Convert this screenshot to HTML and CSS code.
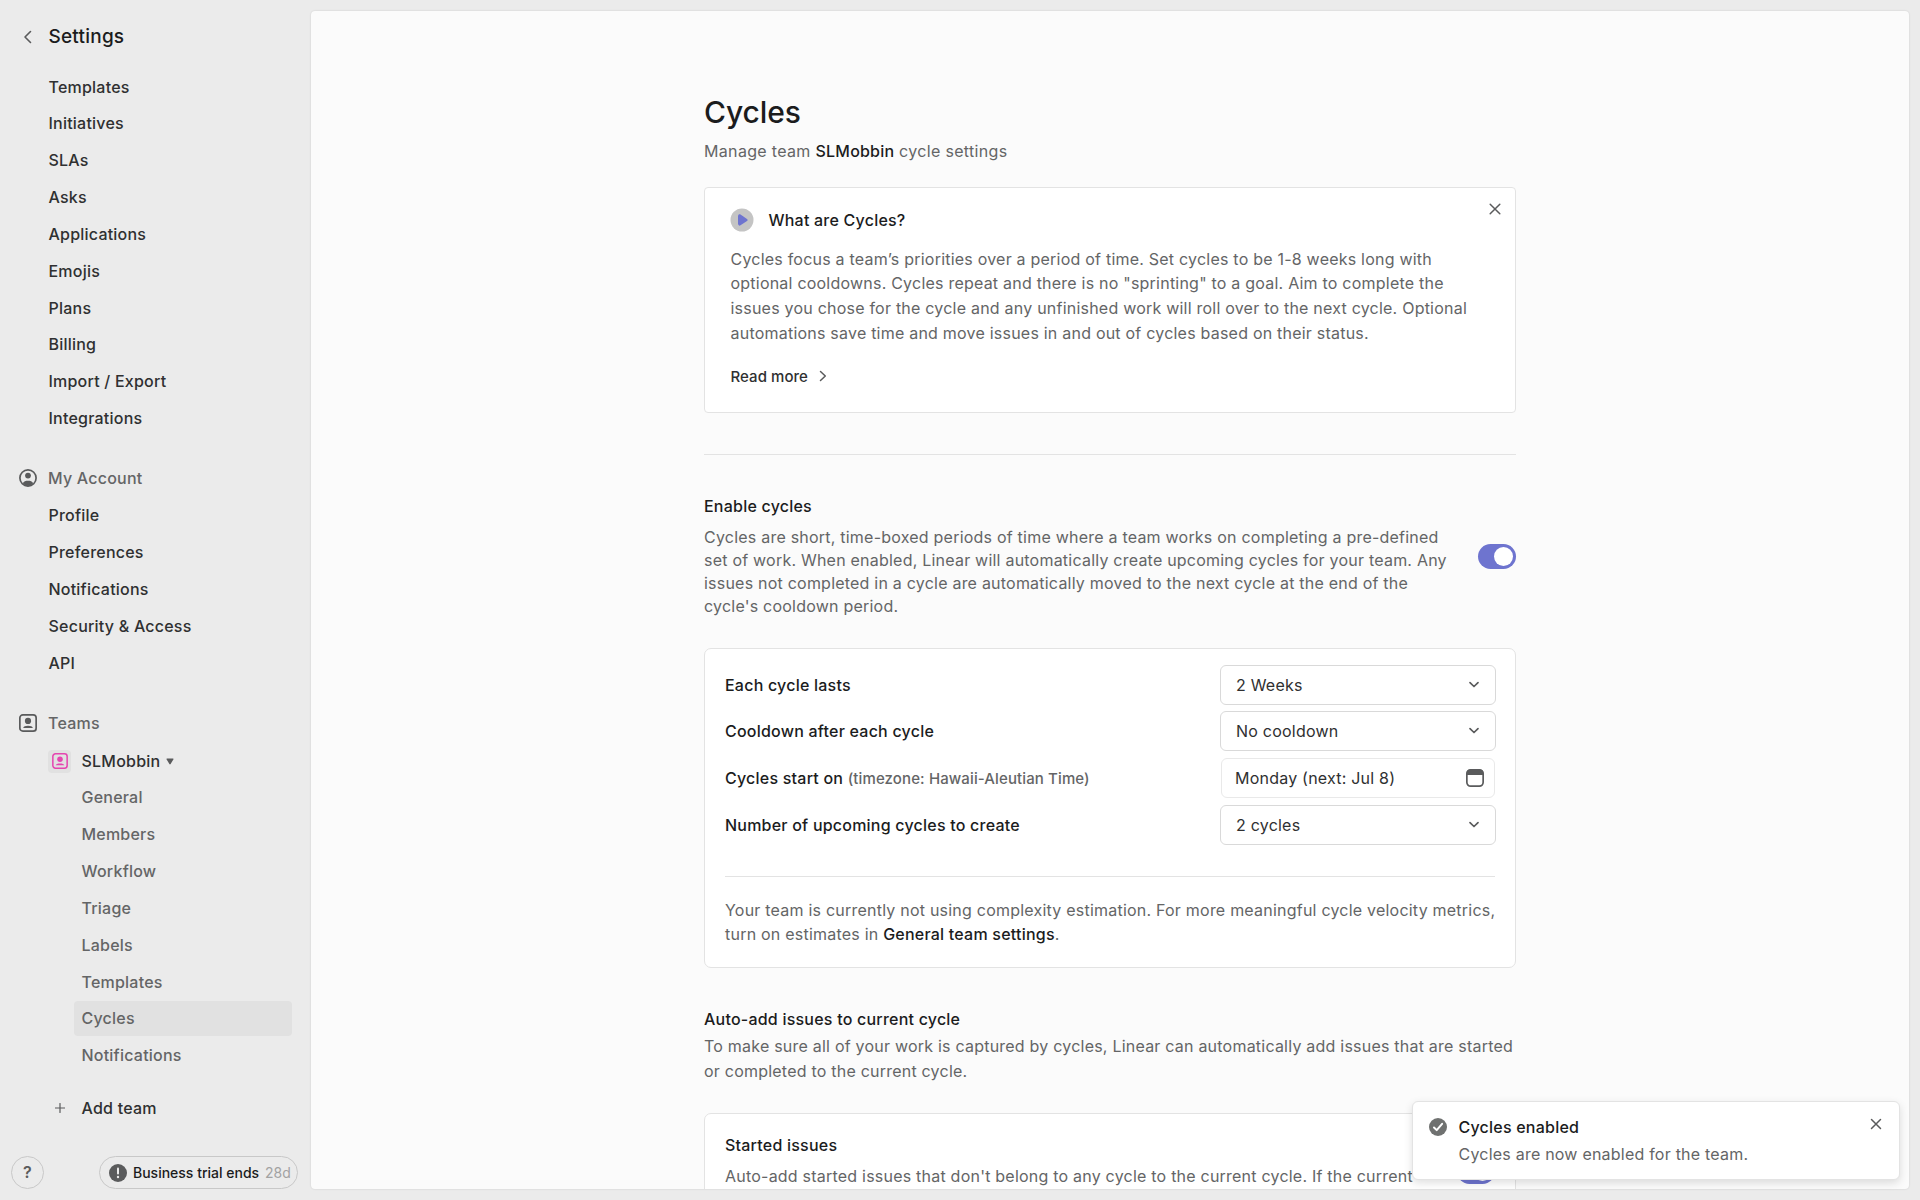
FILE: index.html
```html
<!DOCTYPE html>
<html lang="en">
<head>
    <meta charset="UTF-8">
    <title>Cycles - Settings</title>
    <link rel="stylesheet" href="styles.css">
</head>
<body>
<div class="sidebar">
    <div class="back">
        <svg width="18" height="18" viewBox="0 0 18 18"><path d="M11.500 3.500 6 9l5.500 5.500" fill="none" stroke="#5a5b5c" stroke-width="1.600" stroke-linecap="round" stroke-linejoin="round"/></svg>
        <span>Settings</span>
    </div>
    <ul class="menu">
        <li>Templates</li>
        <li>Initiatives</li>
        <li>SLAs</li>
        <li>Asks</li>
        <li>Applications</li>
        <li>Emojis</li>
        <li>Plans</li>
        <li>Billing</li>
        <li>Import / Export</li>
        <li>Integrations</li>
    </ul>
    <div class="group">
        <svg width="18" height="18" viewBox="0 0 18 18"><circle cx="9" cy="9" r="8.100" fill="none" stroke="#5a5b5c" stroke-width="1.700"/><circle cx="9" cy="6.600" r="2.900" fill="#5a5b5c"/><path d="M3.800 14.200C5 12 6.500 11.700 9 11.700s4 .3 5.200 2.500C12.800 16 11 17 9 17s-3.800-1-5.200-2.800z" fill="#5a5b5c"/></svg>
        <span>My Account</span>
    </div>
    <ul class="menu">
        <li>Profile</li>
        <li>Preferences</li>
        <li>Notifications</li>
        <li>Security &amp; Access</li>
        <li>API</li>
    </ul>
    <div class="group">
        <svg width="18" height="18" viewBox="0 0 18 18"><rect x=".85" y=".85" width="16.300" height="16.300" rx="3" fill="none" stroke="#5a5b5c" stroke-width="1.700"/><circle cx="9" cy="6.900" r="3.100" fill="#5a5b5c"/><path d="M4.200 13.900c.3-1.400 2-2.100 4.800-2.100s4.500.7 4.800 2.100z" fill="#5a5b5c"/></svg>
        <span>Teams</span>
    </div>
    <div class="team">
        <div class="team-icon">
            <svg width="16" height="16" viewBox="0 0 18 18"><rect x=".95" y=".95" width="16.100" height="16.100" rx="3" fill="none" stroke="#e545b0" stroke-width="1.700"/><circle cx="9" cy="6.900" r="3.100" fill="#e545b0"/><path d="M4.200 13.900c.3-1.400 2-2.100 4.800-2.100s4.500.7 4.800 2.100z" fill="#e545b0"/></svg>
        </div>
        <span>SLMobbin</span>
        <svg class="caret" width="8" height="7" viewBox="0 0 8 7"><path d="M1 .5h6c.5 0 .7.4.5.8L4.600 6c-.3.5-.9.5-1.200 0L.5 1.300C.3.900.5.5 1 .5z" fill="#5a5b5c"/></svg>
    </div>
    <ul class="menu submenu">
        <li>General</li>
        <li>Members</li>
        <li>Workflow</li>
        <li>Triage</li>
        <li>Labels</li>
        <li>Templates</li>
        <li class="active">Cycles</li>
        <li>Notifications</li>
    </ul>
    <div class="add-team">
        <svg width="10" height="10" viewBox="0 0 10 10"><path d="M5 .5v9M.5 5h9" stroke="#5a5b5c" stroke-width="1.200" stroke-linecap="round"/></svg>
        <span>Add team</span>
    </div>
    <div class="bottom">
        <div class="help">?</div>
        <div class="trial">
            <svg width="18" height="18" viewBox="0 0 18 18"><circle cx="9" cy="9" r="9" fill="#5a5b5c"/><path d="M9 4.600v5" stroke="#ececec" stroke-width="2" stroke-linecap="round"/><circle cx="9" cy="13" r="1.200" fill="#ececec"/></svg>
            <span>Business trial ends</span>
            <em>28d</em>
        </div>
    </div>
</div>

<div class="panel">
    <div class="content">
        <h1>Cycles</h1>
        <p class="subtitle">Manage team <b>SLMobbin</b> cycle settings</p>

        <div class="intro">
            <svg class="close" width="12" height="12" viewBox="0 0 12 12"><path d="M1.200 1.200l9.600 9.600M10.800 1.200l-9.600 9.600" stroke="#5a5b5c" stroke-width="1.500" stroke-linecap="round"/></svg>
            <div class="intro-title">
                <svg width="24" height="24" viewBox="0 0 24 24"><circle cx="12" cy="12" r="11.500" fill="#c4c4c4"/><path d="M8.700 6.600c.5-.5 1.200-.4 1.800 0l6.500 4.300c.8.600.8 1.600 0 2.200l-6.500 4.200c-.6.4-1.300.5-1.800 0-.6-.5-.7-1.200-.7-2V8.600c0-.8.100-1.500.7-2z" fill="#6e74cf"/></svg>
                <span>What are Cycles?</span>
            </div>
            <p>Cycles focus a team’s priorities over a period of time. Set cycles to be 1-8 weeks long with<br>optional cooldowns. Cycles repeat and there is no "sprinting" to a goal. Aim to complete the<br>issues you chose for the cycle and any unfinished work will roll over to the next cycle. Optional<br>automations save time and move issues in and out of cycles based on their status.</p>
            <div class="more">
                <span>Read more</span>
                <svg width="8" height="12" viewBox="0 0 8 12"><path d="M1.500 1.500 6.300 6l-4.800 4.500" fill="none" stroke="#5a5b5c" stroke-width="1.500" stroke-linecap="round" stroke-linejoin="round"/></svg>
            </div>
        </div>

        <div class="line"></div>

        <h2>Enable cycles</h2>
        <div class="enable">
            <p>Cycles are short, time-boxed periods of time where a team works on completing a pre-defined<br>set of work. When enabled, Linear will automatically create upcoming cycles for your team. Any<br>issues not completed in a cycle are automatically moved to the next cycle at the end of the<br>cycle's cooldown period.</p>
            <div class="toggle"></div>
        </div>

        <div class="card options">
            <div class="row">
                <label>Each cycle lasts</label>
                <div class="select">2 Weeks
                    <svg width="12" height="8" viewBox="0 0 12 8"><path d="M2 1.700 6 5.500l4-3.800" fill="none" stroke="#5a5b5c" stroke-width="1.700" stroke-linecap="round" stroke-linejoin="round"/></svg>
                </div>
            </div>
            <div class="row">
                <label>Cooldown after each cycle</label>
                <div class="select">No cooldown
                    <svg width="12" height="8" viewBox="0 0 12 8"><path d="M2 1.700 6 5.500l4-3.800" fill="none" stroke="#5a5b5c" stroke-width="1.700" stroke-linecap="round" stroke-linejoin="round"/></svg>
                </div>
            </div>
            <div class="row row-date">
                <label>Cycles start on <small>(timezone: Hawaii-Aleutian Time)</small></label>
                <div class="select date">Monday (next: Jul 8)
                    <svg width="18" height="18" viewBox="0 0 18 18"><rect x=".85" y=".85" width="16.300" height="16.300" rx="3.800" fill="none" stroke="#5a5b5c" stroke-width="1.700"/><path d="M4.500.5h9a4 4 0 0 1 4 4V6H.5V4.500a4 4 0 0 1 4-4z" fill="#5a5b5c"/></svg>
                </div>
            </div>
            <div class="row">
                <label>Number of upcoming cycles to create</label>
                <div class="select">2 cycles
                    <svg width="12" height="8" viewBox="0 0 12 8"><path d="M2 1.700 6 5.500l4-3.800" fill="none" stroke="#5a5b5c" stroke-width="1.700" stroke-linecap="round" stroke-linejoin="round"/></svg>
                </div>
            </div>
            <p class="note">Your team is currently not using complexity estimation. For more meaningful cycle velocity metrics,<br>turn on estimates in <b>General team settings</b>.</p>
        </div>

        <h2>Auto-add issues to current cycle</h2>
        <p class="desc">To make sure all of your work is captured by cycles, Linear can automatically add issues that are started<br>or completed to the current cycle.</p>

        <div class="card auto">
            <div class="auto-text">
                <h3>Started issues</h3>
                <p>Auto-add started issues that don't belong to any cycle to the current cycle. If the current</p>
            </div>
            <div class="toggle"></div>
        </div>
    </div>
</div>

<div class="toast">
    <svg width="18" height="18" viewBox="0 0 18 18"><circle cx="9" cy="9" r="9" fill="#6f7170"/><path d="M5 9.500l2.700 2.600 5.400-6.300" fill="none" stroke="#fff" stroke-width="2" stroke-linecap="round" stroke-linejoin="round"/></svg>
    <div class="toast-text">
        <h3>Cycles enabled</h3>
        <p>Cycles are now enabled for the team.</p>
    </div>
    <svg width="12" height="12" viewBox="0 0 12 12"><path d="M1.500 1.500l9 9M10.500 1.500l-9 9" stroke="#5a5b5c" stroke-width="1.500" stroke-linecap="round"/></svg>
</div>
</body>
</html>
```
FILE: styles.css
```css
* {
    margin: 0;
    padding: 0;
    box-sizing: border-box;
}

body {
    display: flex;
    height: 1200px;
    overflow: hidden;
    background-color: #ebebeb;
    color: #1b1c1d;
    font-family: Inter, "Liberation Sans", sans-serif;
    font-size: 16px;
    letter-spacing: .22px;
    white-space: nowrap;
}

ul {
    list-style: none;
}

svg {
    display: block;
    flex-shrink: 0;
}

/* sidebar */
.sidebar {
    display: flex;
    flex-direction: column;
    width: 311px;
    height: 1200px;
    padding-top: 18px;
    font-weight: 500;
}

.back {
    display: flex;
    align-items: center;
    gap: 11.500px;
    height: 37px;
    padding-left: 19px;
    font-size: 19px;
}

.menu {
    padding: 0 19px 0 40.500px;
    color: #2f3031;
}

.back + .menu {
    margin-top: 14.600px;
}

.menu li {
    height: 35px;
    margin-bottom: 1.830px;
    padding-left: 8px;
    border-radius: 4px;
    line-height: 35px;
}

.group {
    display: flex;
    align-items: center;
    gap: 11px;
    height: 36.800px;
    margin: 21.700px 0 2px;
    padding-left: 19px;
    color: #646566;
}

.team {
    display: flex;
    align-items: center;
    height: 36.800px;
    margin-bottom: .7px;
    padding-left: 48px;
    color: #2f3031;
}

.team-icon {
    display: flex;
    align-items: center;
    justify-content: center;
    width: 23px;
    height: 23px;
    margin-right: 10.500px;
    border-radius: 4px;
    background-color: #e1e1e1;
}

.caret {
    margin-left: 6px;
}

.submenu {
    padding-left: 73.500px;
    color: #646566;
}

.menu .active {
    background-color: #e1e1e1;
}

.add-team {
    display: flex;
    align-items: center;
    gap: 17px;
    height: 35px;
    margin-top: 15px;
    padding-left: 54.500px;
    color: #2f3031;
}

.bottom {
    display: flex;
    justify-content: space-between;
    margin-top: auto;
    padding: 0 13px 11px 11px;
}

.help {
    width: 33px;
    height: 33px;
    border: 1px solid #c8c8c8;
    border-radius: 50%;
    color: #5a5b5c;
    font-weight: 600;
    line-height: 31px;
    text-align: center;
}

.trial {
    display: flex;
    align-items: center;
    gap: 6px;
    width: 199px;
    height: 33px;
    padding-left: 9px;
    border: 1px solid #c8c8c8;
    border-radius: 17px;
    color: #1b1c1d;
    font-size: 14px;
    letter-spacing: 0;
}

.trial em {
    color: #a2a2a2;
    font-style: normal;
    font-weight: 400;
}

/* main panel */
.panel {
    width: 1598px;
    height: 1178px;
    margin-top: 11px;
    overflow: hidden;
    border-radius: 4px;
    background-color: #fbfbfb;
    box-shadow: 0 0 2px rgba(0, 0, 0, .15);
}

.content {
    width: 812px;
    margin: 0 auto;
    padding-top: 82px;
    color: #646566;
}

h1 {
    height: 38px;
    color: #1b1c1d;
    font-size: 30px;
    font-weight: 500;
    letter-spacing: -.1px;
    line-height: 38px;
}

h2, h3 {
    color: #1b1c1d;
    font-size: 16px;
    font-weight: 500;
    line-height: 24px;
}

p {
    line-height: 24.700px;
}

b {
    color: #1b1c1d;
    font-weight: 500;
}

.subtitle {
    margin-top: 8px;
    letter-spacing: .33px;
}

.subtitle b {
    letter-spacing: .2px;
}

.intro {
    position: relative;
    height: 226px;
    margin-top: 23px;
    padding: 20px 25.500px;
    border: 1px solid #e3e3e3;
    border-radius: 4px;
    background-color: #fff;
}

.close {
    position: absolute;
    top: 15px;
    right: 14.500px;
}

.intro-title {
    display: flex;
    align-items: center;
    gap: 15px;
    height: 24px;
    margin: 0 0 15px -1px;
    color: #1b1c1d;
    font-weight: 500;
}

.more {
    display: flex;
    align-items: center;
    gap: 11px;
    margin-top: 21px;
    color: #2f3031;
    font-size: 15px;
    font-weight: 500;
    letter-spacing: .05px;
}

.line {
    height: 1px;
    margin: 41px 0 39px;
    background-color: #e3e3e3;
}

.enable {
    display: flex;
    justify-content: space-between;
    margin-top: 8px;
}

.enable p {
    line-height: 23.100px;
}

.toggle {
    width: 38px;
    height: 25px;
    margin-top: 18px;
    padding: 3px;
    border-radius: 13px;
    background-color: #6e74cf;
}

.toggle::before {
    content: "";
    display: block;
    width: 19px;
    height: 19px;
    margin-left: auto;
    border-radius: 50%;
    background-color: #fff;
}

.card {
    padding: 0 20px;
    border: 1px solid #e3e3e3;
    border-radius: 7px;
    background-color: #fff;
}

.options {
    height: 320px;
    margin: 30px 0 39px;
    padding-top: 16px;
}

.row {
    display: flex;
    align-items: center;
    justify-content: space-between;
    height: 40px;
    margin-bottom: 6px;
    color: #1b1c1d;
}

.row label {
    font-weight: 500;
}

.row small {
    color: #646566;
    font-size: 15px;
    letter-spacing: .12px;
}

.row-date {
    margin: 7px 0;
}

.select {
    display: flex;
    align-items: center;
    justify-content: space-between;
    width: 276px;
    height: 40px;
    margin-right: -1px;
    padding: 0 15px;
    border: 1px solid #d9d9d9;
    border-radius: 6px;
    color: #2f3031;
}

.date {
    width: 274px;
    margin-right: 0;
    padding: 0 10px 0 13px;
    border-color: #e9e9e9;
}

.note {
    margin-top: 31px;
    padding-top: 20.500px;
    border-top: 1px solid #e3e3e3;
}

.note b {
    font-weight: 450;
}

.desc {
    margin-top: 3px;
}

.auto {
    display: flex;
    justify-content: space-between;
    height: 120px;
    margin-top: 30px;
    padding-top: 19px;
}

.auto p {
    margin-top: 7px;
}

.auto .toggle {
    margin-top: 26px;
}

/* toast */
.toast {
    position: absolute;
    top: 1101px;
    left: 1412px;
    display: flex;
    width: 488px;
    height: 79px;
    padding: 16px 17px 16px 16px;
    border: 1px solid #e3e3e3;
    border-radius: 6px;
    background-color: #fff;
    box-shadow: 0 3px 8px rgba(0, 0, 0, .13);
}

.toast-text {
    flex: 1;
    margin: -3px 0 0 11.500px;
    color: #646566;
}

.toast p {
    margin-top: 3px;
}
```
